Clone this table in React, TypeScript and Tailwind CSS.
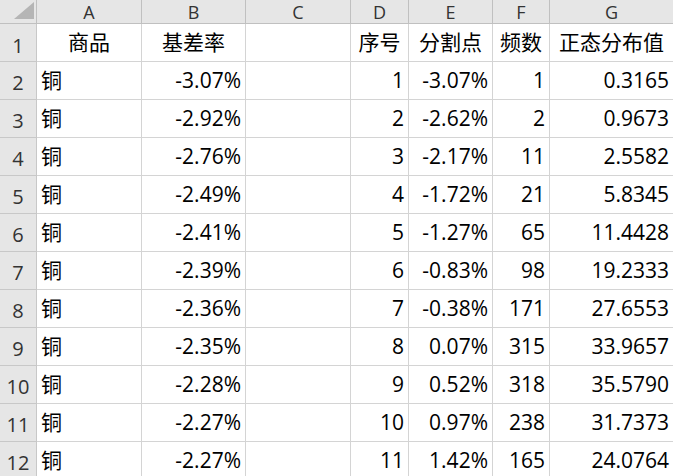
import React from "react";

const cols = ["A", "B", "C", "D", "E", "F", "G"];
const colW = ["w-[105px]", "w-[104px]", "w-[105px]", "w-[58px]", "w-[84px]", "w-[57px]", "w-[124px]"];

const header = ["商品", "基差率", "", "序号", "分割点", "频数", "正态分布值"];
const data: string[][] = [
  ["铜", "-3.07%", "", "1", "-3.07%", "1", "0.3165"],
  ["铜", "-2.92%", "", "2", "-2.62%", "2", "0.9673"],
  ["铜", "-2.76%", "", "3", "-2.17%", "11", "2.5582"],
  ["铜", "-2.49%", "", "4", "-1.72%", "21", "5.8345"],
  ["铜", "-2.41%", "", "5", "-1.27%", "65", "11.4428"],
  ["铜", "-2.39%", "", "6", "-0.83%", "98", "19.2333"],
  ["铜", "-2.36%", "", "7", "-0.38%", "171", "27.6553"],
  ["铜", "-2.35%", "", "8", "0.07%", "315", "33.9657"],
  ["铜", "-2.28%", "", "9", "0.52%", "318", "35.5790"],
  ["铜", "-2.27%", "", "10", "0.97%", "238", "31.7373"],
  ["铜", "-2.27%", "", "11", "1.42%", "165", "24.0764"],
];

const font = { fontFamily: '"Open Sans", "Noto Sans CJK SC", sans-serif' };

export default function App() {
  return (
    <div className="w-[673px] h-[476px] overflow-hidden bg-white text-black" style={font}>
      {/* column header row */}
      <div className="flex h-[24px]">
        <div className="w-[37px] shrink-0 h-full bg-[#e6e6e6] border-r border-b border-[#c0c0c0] flex items-end justify-end pr-[2px] pb-[4px]">
          <svg width="20" height="17" viewBox="0 0 20 17">
            <polygon points="20,0 20,17 0,17" fill="#b5b5b5" />
          </svg>
        </div>
        {cols.map((c, i) => (
          <div
            key={c}
            className={`${colW[i]} shrink-0 h-full bg-[#e6e6e6] border-r border-b border-[#c0c0c0] flex items-center justify-center text-[18px] text-[#333] leading-none`}
          >
            {c}
          </div>
        ))}
      </div>
      {/* row 1 */}
      <div className="flex h-[38px]">
        <div className="w-[37px] shrink-0 h-full bg-[#e6e6e6] border-r border-b border-[#c8c8c8] flex items-center justify-center text-[20px] text-[#333] leading-none pt-[6px]">
          1
        </div>
        {header.map((h, i) => (
          <div
            key={i}
            className={`${colW[i]} shrink-0 h-full border-r border-b border-[#d4d4d4] flex items-center justify-center text-[21px] leading-none whitespace-nowrap`}
          >
            {h}
          </div>
        ))}
      </div>
      {data.map((row, r) => (
        <div key={r} className="flex h-[38px]">
          <div className="w-[37px] shrink-0 h-full bg-[#e6e6e6] border-r border-b border-[#c8c8c8] flex items-center justify-center text-[20px] text-[#333] leading-none pt-[4px]">
            {r + 2}
          </div>
          {row.map((v, i) => (
            <div
              key={i}
              className={`${colW[i]} shrink-0 h-full border-r border-b border-[#d4d4d4] flex items-center text-[21px] leading-none whitespace-nowrap ${
                i === 0 ? "justify-start pl-[4px]" : "justify-end pr-[4px]"
              }`}
            >
              {v}
            </div>
          ))}
        </div>
      ))}
    </div>
  );
}
